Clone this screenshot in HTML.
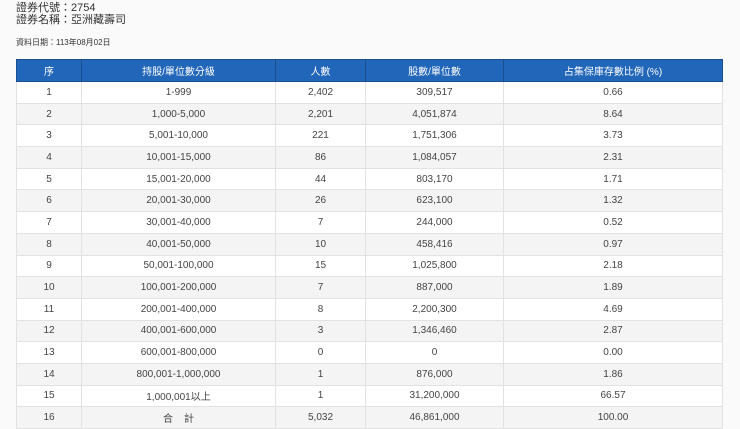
<!DOCTYPE html>
<html><head><meta charset="utf-8"><style>
body{margin:0;background:#fafafa;font-family:"Liberation Sans","Noto Sans CJK TC",sans-serif;color:#444;width:740px;height:427px;overflow:hidden;position:relative}
.t1{position:absolute;left:16px;top:2px;font-size:11px;line-height:12px;color:#333}
.t2{position:absolute;left:16px;top:37px;font-size:8px;color:#333}
table{position:absolute;left:16px;top:59px;width:707px;border-collapse:collapse;font-size:10px}
td,th{border:1px solid #e2e2e2;text-align:center;padding:0;height:20.7px}
th{background:#2166b8;color:#fff;font-weight:normal;border:1px solid #1a4f8f;height:21px}
tr:nth-child(odd) td{background:#f4f4f4}
tr:nth-child(even) td{background:#fff}
</style></head><body>
<div class="t1">證券代號：2754<br>證券名稱：亞洲藏壽司</div>
<div class="t2">資料日期：113年08月02日</div>
<table>
<tr><th style="width:64px">序</th><th style="width:193px">持股/單位數分級</th><th style="width:89px">人數</th><th style="width:137px">股數/單位數</th><th>占集保庫存數比例 (%)</th></tr>
<tr><td>1</td><td>1-999</td><td>2,402</td><td>309,517</td><td>0.66</td></tr>
<tr><td>2</td><td>1,000-5,000</td><td>2,201</td><td>4,051,874</td><td>8.64</td></tr>
<tr><td>3</td><td>5,001-10,000</td><td>221</td><td>1,751,306</td><td>3.73</td></tr>
<tr><td>4</td><td>10,001-15,000</td><td>86</td><td>1,084,057</td><td>2.31</td></tr>
<tr><td>5</td><td>15,001-20,000</td><td>44</td><td>803,170</td><td>1.71</td></tr>
<tr><td>6</td><td>20,001-30,000</td><td>26</td><td>623,100</td><td>1.32</td></tr>
<tr><td>7</td><td>30,001-40,000</td><td>7</td><td>244,000</td><td>0.52</td></tr>
<tr><td>8</td><td>40,001-50,000</td><td>10</td><td>458,416</td><td>0.97</td></tr>
<tr><td>9</td><td>50,001-100,000</td><td>15</td><td>1,025,800</td><td>2.18</td></tr>
<tr><td>10</td><td>100,001-200,000</td><td>7</td><td>887,000</td><td>1.89</td></tr>
<tr><td>11</td><td>200,001-400,000</td><td>8</td><td>2,200,300</td><td>4.69</td></tr>
<tr><td>12</td><td>400,001-600,000</td><td>3</td><td>1,346,460</td><td>2.87</td></tr>
<tr><td>13</td><td>600,001-800,000</td><td>0</td><td>0</td><td>0.00</td></tr>
<tr><td>14</td><td>800,001-1,000,000</td><td>1</td><td>876,000</td><td>1.86</td></tr>
<tr><td>15</td><td>1,000,001以上</td><td>1</td><td>31,200,000</td><td>66.57</td></tr>
<tr><td>16</td><td>合&nbsp;&nbsp;&nbsp;&nbsp;計</td><td>5,032</td><td>46,861,000</td><td>100.00</td></tr>
</table>
</body></html>
